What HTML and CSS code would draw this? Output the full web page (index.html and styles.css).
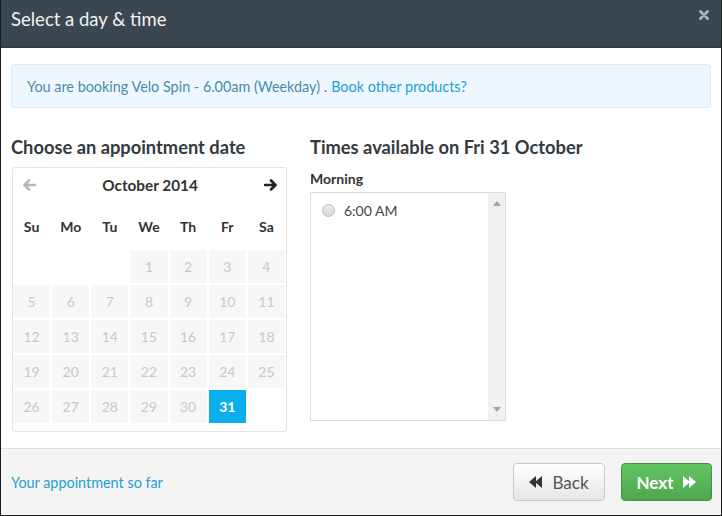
FILE: index.html
```html
<!DOCTYPE html>
<html>
<head>
<meta charset="utf-8">
<link rel="stylesheet" href="styles.css">
</head>
<body>
<div class="modal">
  <div class="header">
    <h1 class="title">Select a day &amp; time</h1>
    <svg class="close" width="10" height="10" viewBox="0 0 10 10"><path d="M1.5 1.5 L8.5 8.5 M8.5 1.5 L1.5 8.5" stroke="#a9aeb1" stroke-width="3" stroke-linecap="round"/></svg>
  </div>
  <div class="body">
    <div class="info">You are booking Velo Spin - 6.00am (Weekday) . <a class="link">Book other products?</a></div>
    <div class="cols">
      <div class="col-left">
        <h2 class="heading">Choose an appointment date</h2>
        <div class="calendar">
          <div class="month-row">
            <svg class="arrow" width="14" height="12" viewBox="0 0 14 12"><path d="M13 6 H3 M7 1.5 L2.5 6 L7 10.5" fill="none" stroke="#b8b8b8" stroke-width="2.6" stroke-linecap="round" stroke-linejoin="round"/></svg>
            <span class="month">October 2014</span>
            <svg class="arrow" width="14" height="12" viewBox="0 0 14 12"><path d="M1 6 H11 M7 1.5 L11.5 6 L7 10.5" fill="none" stroke="#222" stroke-width="2.6" stroke-linecap="round" stroke-linejoin="round"/></svg>
          </div>
          <div class="week-row">
            <span>Su</span><span>Mo</span><span>Tu</span><span>We</span><span>Th</span><span>Fr</span><span>Sa</span>
          </div>
          <div class="days">
            <span class="empty"></span><span class="empty"></span><span class="empty"></span>
            <span class="day">1</span><span class="day">2</span><span class="day">3</span><span class="day">4</span>
            <span class="day">5</span><span class="day">6</span><span class="day">7</span><span class="day">8</span><span class="day">9</span><span class="day">10</span><span class="day">11</span>
            <span class="day">12</span><span class="day">13</span><span class="day">14</span><span class="day">15</span><span class="day">16</span><span class="day">17</span><span class="day">18</span>
            <span class="day">19</span><span class="day">20</span><span class="day">21</span><span class="day">22</span><span class="day">23</span><span class="day">24</span><span class="day">25</span>
            <span class="day">26</span><span class="day">27</span><span class="day">28</span><span class="day">29</span><span class="day">30</span><span class="day selected">31</span><span class="empty"></span>
          </div>
        </div>
      </div>
      <div class="col-right">
        <h2 class="heading">Times available on Fri 31 October</h2>
        <div class="period">Morning</div>
        <div class="listbox">
          <div class="options">
            <label class="option"><span class="radio"></span><span>6:00 AM</span></label>
          </div>
          <div class="scrollbar">
            <svg width="8" height="5" viewBox="0 0 8 5"><path d="M0 5 L4 0 L8 5 Z" fill="#a3a3a3"/></svg>
            <svg width="8" height="5" viewBox="0 0 8 5"><path d="M0 0 L4 5 L8 0 Z" fill="#a3a3a3"/></svg>
          </div>
        </div>
      </div>
    </div>
  </div>
  <div class="footer">
    <a class="link footer-link">Your appointment so far</a>
    <div class="buttons">
      <button class="btn btn-back">
        <svg width="14" height="12" viewBox="0 0 14 12"><path d="M0 6 L7 0 V12 Z M6 6 L13 0 V12 Z" fill="#333"/></svg>
        <span>Back</span>
      </button>
      <button class="btn btn-next">
        <span>Next</span>
        <svg width="14" height="12" viewBox="0 0 14 12"><path d="M14 6 L7 0 V12 Z M8 6 L1 0 V12 Z" fill="#fff"/></svg>
      </button>
    </div>
  </div>
</div>
</body>
</html>
```

FILE: styles.css
```css
* { box-sizing: border-box; }
body {
  margin: 0;
  font-family: Lato, "Liberation Sans", sans-serif;
  color: #3a4047;
}
.modal {
  width: 722px;
  height: 516px;
  border: 1px solid #1c1c1c;
  border-top: none;
  display: flex;
  flex-direction: column;
  background: #fff;
}
.header {
  height: 48px;
  background: #3a4750;
  border-bottom: 2px solid #2f3a41;
  display: flex;
  align-items: flex-start;
  justify-content: space-between;
  padding: 0 12px 0 10px;
}
.title {
  margin: 0;
  font-size: 18.5px;
  font-weight: normal;
  color: #f2f2f2;
  line-height: 22px;
  padding-top: 8px;
}
.close { margin-top: 10px; }
.body {
  flex: 1;
  padding: 16px 10px 0 10px;
}
.info {
  height: 44px;
  background: #eef7fd;
  border: 1px solid #d6ecf9;
  border-radius: 3px;
  padding: 0 15px;
  display: flex;
  align-items: center;
  font-size: 14.4px;
  color: #4a8cab;
}
.link { color: #1f9fd6; text-decoration: none; margin-left: 4px; }
.cols {
  display: flex;
  gap: 24px;
  margin-top: 29px;
}
.col-left { width: 275px; }
.heading {
  margin: 0;
  font-size: 18.3px;
  font-weight: bold;
  line-height: 20px;
  color: #333a40;
  white-space: nowrap;
}
.calendar {
  margin-top: 10px;
  margin-left: 1px;
  width: 275px;
  border: 1px solid #e3e3e3;
  border-radius: 3px;
  padding: 0 1px 8px 0;
}
.month-row {
  height: 34px;
  display: flex;
  align-items: center;
  justify-content: space-between;
  padding: 0 7px 0 9px;
}
.month { font-size: 15.3px; font-weight: bold; color: #333; }
.week-row {
  margin-top: 6px;
  height: 36px;
  display: grid;
  grid-template-columns: repeat(7, 1fr);
  column-gap: 2px;
  align-items: center;
  text-align: center;
  font-size: 14px;
  font-weight: bold;
  color: #333;
}
.days {
  margin-top: 6px;
  display: grid;
  grid-template-columns: repeat(7, 1fr);
  grid-auto-rows: 33px;
  gap: 2px;
}
.day {
  background: #f7f7f7;
  color: #c8c8c8;
  font-size: 14px;
  display: flex;
  align-items: center;
  justify-content: center;
}
.day.selected {
  background: #0aaeec;
  color: #fff;
  font-weight: bold;
}
.col-right { flex: 1; }
.period {
  margin-top: 13px;
  font-size: 14px;
  font-weight: bold;
  line-height: 18px;
  color: #333;
}
.listbox {
  margin-top: 4px;
  width: 196px;
  height: 229px;
  border: 1px solid #dcdcdc;
  display: flex;
}
.options { flex: 1; padding: 9px 0 0 11px; }
.option {
  display: flex;
  align-items: center;
  gap: 9px;
  font-size: 14px;
  color: #444;
}
.radio {
  width: 13px;
  height: 13px;
  border-radius: 50%;
  border: 1px solid #b9b9b9;
  background: linear-gradient(#ececec, #d8d8d8);
}
.scrollbar {
  width: 17px;
  background: #f1f1f1;
  display: flex;
  flex-direction: column;
  justify-content: space-between;
  align-items: center;
  padding: 8px 0 8px;
}
.footer {
  height: 67px;
  border-top: 1px solid #dedede;
  background: #f4f4f4;
  display: flex;
  align-items: center;
  justify-content: space-between;
  padding: 0 9px 0 10px;
}
.footer-link { margin-left: 0; font-size: 14.4px; }
.buttons { display: flex; gap: 16px; }
.btn {
  height: 38px;
  border-radius: 4px;
  font-family: Lato, "Liberation Sans", sans-serif;
  font-size: 17px;
  display: flex;
  align-items: center;
  justify-content: center;
  gap: 9px;
  padding: 0;
}
.btn-back {
  width: 92px;
  background: linear-gradient(#ffffff, #e6e6e6);
  border: 1px solid #c9c9c9;
  color: #555;
}
.btn-next {
  width: 91px;
  background: linear-gradient(#62c462, #4fa74f);
  border: 1px solid #459145;
  color: #fff;
  font-weight: bold;
}
```
